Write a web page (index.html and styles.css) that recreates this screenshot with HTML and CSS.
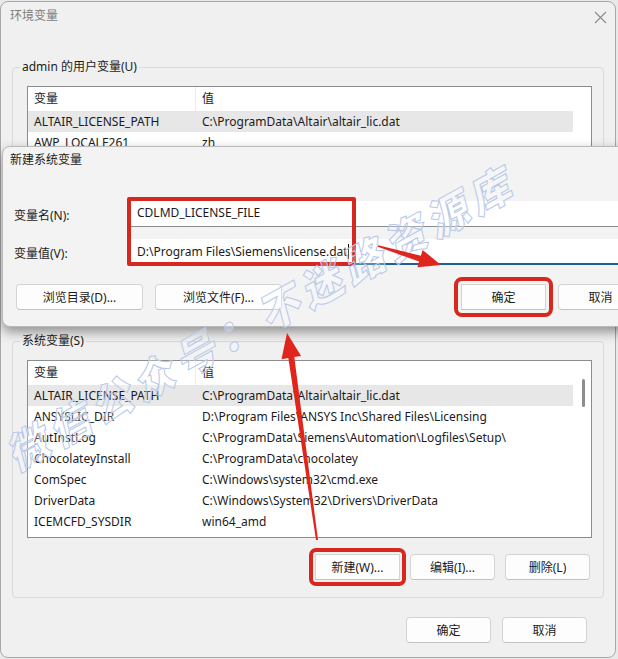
FILE: index.html
```html
<!DOCTYPE html>
<html lang="zh-CN">
<head>
<meta charset="utf-8">
<title>环境变量</title>
<link rel="stylesheet" href="styles.css">
</head>
<body>
<div class="desk">
  <div class="win">
    <div class="titlebar">
      <span class="title">环境变量</span>
      <svg class="close" width="13" height="13" viewBox="0 0 13 13"><path d="M1 1 L12 12 M12 1 L1 12" stroke="#8a8a8a" stroke-width="1.1" fill="none"/></svg>
    </div>

    <fieldset class="group">
      <legend>admin 的用户变量(U)</legend>
      <div class="list">
        <div class="rows">
          <div class="row head"><span class="c1">变量</span><span class="c2">值</span></div>
          <div class="row sel"><span class="c1">ALTAIR_LICENSE_PATH</span><span class="c2">C:\ProgramData\Altair\altair_lic.dat</span></div>
          <div class="row"><span class="c1">AWP_LOCALE261</span><span class="c2">zh</span></div>
          <div class="row"><span class="c1">OneDrive</span><span class="c2">C:\Users\admin\OneDrive</span></div>
          <div class="row"><span class="c1">Path</span><span class="c2">C:\Users\admin\AppData\Local\Microsoft\WindowsApps;</span></div>
          <div class="row"><span class="c1">TEMP</span><span class="c2">C:\Users\admin\AppData\Local\Temp</span></div>
          <div class="row"><span class="c1">TMP</span><span class="c2">C:\Users\admin\AppData\Local\Temp</span></div>
        </div>
        <div class="scroll"></div>
      </div>
      <div class="btnrow">
        <button class="btn">新建(N)...</button>
        <button class="btn">编辑(E)...</button>
        <button class="btn">删除(D)</button>
      </div>
    </fieldset>

    <fieldset class="group sys">
      <legend>系统变量(S)</legend>
      <div class="list">
        <div class="rows">
          <div class="row head"><span class="c1">变量</span><span class="c2">值</span></div>
          <div class="row sel"><span class="c1">ALTAIR_LICENSE_PATH</span><span class="c2">C:\ProgramData\Altair\altair_lic.dat</span></div>
          <div class="row"><span class="c1">ANSYSLIC_DIR</span><span class="c2">D:\Program Files\ANSYS Inc\Shared Files\Licensing</span></div>
          <div class="row"><span class="c1">AutInstLog</span><span class="c2">C:\ProgramData\Siemens\Automation\Logfiles\Setup\</span></div>
          <div class="row"><span class="c1">ChocolateyInstall</span><span class="c2">C:\ProgramData\chocolatey</span></div>
          <div class="row"><span class="c1">ComSpec</span><span class="c2">C:\Windows\system32\cmd.exe</span></div>
          <div class="row"><span class="c1">DriverData</span><span class="c2">C:\Windows\System32\Drivers\DriverData</span></div>
          <div class="row"><span class="c1">ICEMCFD_SYSDIR</span><span class="c2">win64_amd</span></div>
        </div>
        <div class="scroll"><span class="thumb"></span></div>
      </div>
      <div class="btnrow">
        <button class="btn marked">新建(W)...</button>
        <button class="btn">编辑(I)...</button>
        <button class="btn">删除(L)</button>
      </div>
    </fieldset>

    <div class="footer">
      <button class="btn">确定</button>
      <button class="btn">取消</button>
    </div>
  </div>

  <div class="dialog">
    <div class="dtitle">新建系统变量</div>
    <div class="form">
      <div class="frow">
        <label class="flabel">变量名(N):</label>
        <div class="input">CDLMD_LICENSE_FILE</div>
      </div>
      <div class="frow second">
        <label class="flabel">变量值(V):</label>
        <div class="input focus">D:\Program Files\Siemens\license.dat<span class="caret"></span></div>
      </div>
    </div>
    <div class="dbtns">
      <button class="btn wide">浏览目录(D)...</button>
      <button class="btn wide">浏览文件(F)...</button>
      <button class="btn ok marked2">确定</button>
      <button class="btn">取消</button>
    </div>
  </div>

  <div class="redbox"></div>

  <svg class="overlay" width="618" height="659" viewBox="0 0 618 659">
    <text class="wm" x="0" y="0" transform="translate(16 472) rotate(-29)">微信公众号：不迷路资源库</text>
    <polygon fill="#e0261c" points="441,265 417.4,267.2 419.1,261.5 377.8,246.8 378.2,245.2 420.9,255.7 422.6,250"/>
    <polygon fill="#e0261c" points="287,333 301.1,355.9 294.3,357.1 318,540 316,540 288.3,358.1 281.5,359.3"/>
  </svg>
</div>
</body>
</html>
```
FILE: styles.css
```css
* { box-sizing: border-box; }
html, body { margin: 0; padding: 0; }
body {
  font-family: "Noto Sans", "Noto Sans CJK SC", sans-serif;
  font-size: 12px;
  color: #1b1b1b;
  background: #ffffff;
}
.desk {
  position: relative;
  width: 618px;
  height: 659px;
  overflow: hidden;
  background: #e9e9e9;
}
.win {
  margin-top: 1px;
  width: 616px;
  height: 657px;
  border: 1px solid #a8a8a8;
  border-radius: 8px;
  background: #f0f0f0;
  display: flex;
  flex-direction: column;
}
.titlebar {
  height: 28px;
  display: flex;
  align-items: center;
  justify-content: space-between;
  padding: 0 8px 0 9px;
}
.title {
  color: #7d7d7d;
  font-size: 12px;
  line-height: 28px;
}
.close { margin-top: 2px; }

.group {
  margin: 29px 11px 0 11px;
  padding: 11px 11px 17px 14px;
  border: 1px solid #dadada;
  border-radius: 4px;
  min-width: 0;
}
.group.sys { margin-top: 9px; }
.group legend {
  margin-left: -7px;
  padding: 0 2px;
  line-height: 16px;
  font-size: 12px;
}
.list {
  height: 178px;
  border: 1px solid #8c8c8c;
  background: #ffffff;
  display: flex;
  overflow: hidden;
}
.rows { flex: 1; min-width: 0; }
.scroll {
  width: 18px;
  flex: none;
  position: relative;
  padding-top: 18px;
  padding-left: 9px;
}
.thumb {
  display: block;
  width: 3px;
  height: 28px;
  border-radius: 2px;
  background: #8d8d8d;
}
.row {
  display: flex;
  height: 21px;
  line-height: 21px;
  white-space: nowrap;
}
.row.head { height: 24px; line-height: 24px; }
.row.sel { background: #e7e7e7; }
.c1 { width: 168px; flex: none; padding-left: 6px; }
.c2 { padding-left: 6px; overflow: hidden; }
.head .c1 { border-right: 1px solid #ececec; }

.btnrow {
  margin-top: 16px;
  display: flex;
  justify-content: flex-end;
  gap: 10px;
  padding-right: 2px;
}
.btn {
  font-family: "Noto Sans", "Noto Sans CJK SC", sans-serif;
  font-size: 12px;
  color: #1b1b1b;
  width: 85px;
  height: 26px;
  background: #fdfdfd;
  border: 1px solid #d4d4d4;
  border-bottom-color: #c2c2c2;
  border-radius: 4px;
  padding: 0;
}
.btn.marked {
  outline: 4px solid #d6281f;
  outline-offset: 2px;
  border-radius: 1px;
}
.footer {
  margin-top: 19px;
  display: flex;
  justify-content: flex-end;
  gap: 11px;
  padding-right: 28px;
}

.dialog {
  position: absolute;
  left: 2px;
  top: 146px;
  width: 655px;
  height: 181px;
  background: #f3f3f3;
  border: 1px solid #b9b9b9;
  border-radius: 8px;
  box-shadow: 0 5px 12px rgba(0, 0, 0, 0.4);
  padding: 4px 0 0 0;
}
.dtitle {
  padding-left: 7px;
  line-height: 17px;
  font-size: 12px;
}
.form {
  margin-top: 33px;
  padding-left: 11px;
}
.frow {
  display: flex;
  align-items: center;
}
.frow.second { margin-top: 12px; }
.flabel { width: 116px; flex: none; padding-top: 2px; }
.input {
  flex: 1;
  height: 26px;
  line-height: 24px;
  padding-left: 7px;
  background: #ffffff;
  border-bottom: 1px solid #8a8a8a;
  margin-right: 14px;
  white-space: nowrap;
}
.input.focus {
  border-bottom: 2px solid #1d5f98;
  line-height: 25px;
}
.caret {
  display: inline-block;
  width: 1px;
  height: 15px;
  background: #111;
  vertical-align: -3px;
}
.dbtns {
  margin-top: 19px;
  padding-left: 13px;
  display: flex;
  gap: 12px;
}
.btn.wide { width: 127px; }
.btn.ok { margin-left: 167px; }
.btn.marked2 {
  outline: 4px solid #d6281f;
  outline-offset: 3px;
  border-radius: 1px;
}

.redbox {
  position: absolute;
  left: 127px;
  top: 197px;
  width: 229px;
  height: 69px;
  border: 4px solid #d6281f;
  border-radius: 2px;
}
.overlay {
  position: absolute;
  left: 0;
  top: 0;
  pointer-events: none;
}
.wm {
  font-family: "Noto Sans CJK SC", sans-serif;
  font-size: 42px;
  font-weight: 900;
  font-style: italic;
  fill: rgba(255, 255, 255, 0.25);
  stroke: #b8c9ea;
  stroke-width: 1;
  letter-spacing: 6px;
}
```
